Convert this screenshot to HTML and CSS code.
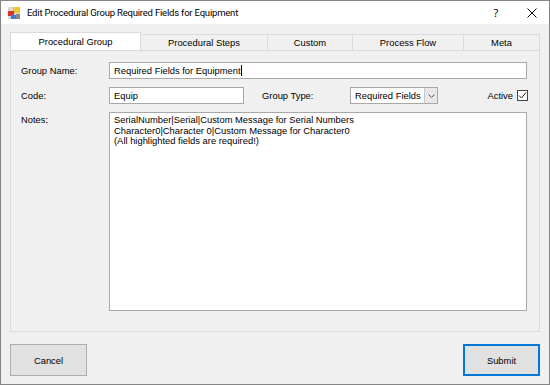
FILE: index.html
```html
<!DOCTYPE html>
<html>
<head>
    <title>Edit Procedural Group Required Fields for Equipment</title>
    <link rel="stylesheet" href="styles.css">
</head>
<body>
    <div class="window">
        <div class="titlebar">
            <svg class="app-icon" width="14" height="14" viewBox="0 0 14 14">
                <rect x="1" y="1" width="12" height="12" fill="#d8d8d8"/>
                <rect x="6" y="1" width="7" height="6" fill="#f4c430"/>
                <rect x="1" y="5" width="6" height="5" fill="#d9342b"/>
                <rect x="4" y="9" width="5" height="4" fill="#3d7bd4"/>
                <rect x="9" y="8" width="4" height="5" fill="#8a8a8a"/>
            </svg>
            <span class="title">Edit Procedural Group Required Fields for Equipment</span>
            <span class="caption-btn help">?</span>
            <span class="caption-btn close">
                <svg width="10" height="10" viewBox="0 0 10 10">
                    <path d="M0.5 0.5 L9.5 9.5 M9.5 0.5 L0.5 9.5" stroke="#000" stroke-width="1"/>
                </svg>
            </span>
        </div>

        <div class="client">
            <div class="tabs">
                <div class="tab active" style="width: 131px">Procedural Group</div>
                <div class="tab" style="width: 127px">Procedural Steps</div>
                <div class="tab" style="width: 85px">Custom</div>
                <div class="tab" style="width: 111px">Process Flow</div>
                <div class="tab" style="width: 76px">Meta</div>
            </div>

            <div class="panel">
                <div class="row">
                    <label class="lbl">Group Name:</label>
                    <div class="textbox wide">Required Fields for Equipment<span class="caret"></span></div>
                </div>
                <div class="row">
                    <label class="lbl">Code:</label>
                    <div class="textbox code">Equip</div>
                    <label class="lbl type-lbl">Group Type:</label>
                    <div class="combo">
                        <span class="combo-text">Required Fields</span>
                        <span class="combo-btn">
                            <svg width="7" height="4" viewBox="0 0 7 4">
                                <path d="M0.5 0.5 L3.5 3.5 L6.5 0.5" fill="none" stroke="#555" stroke-width="1"/>
                            </svg>
                        </span>
                    </div>
                    <span class="spacer"></span>
                    <label class="active-lbl">Active</label>
                    <span class="checkbox">
                        <svg width="9" height="9" viewBox="0 0 9 9">
                            <path d="M1 4.5 L3.5 7 L8 1.5" fill="none" stroke="#222" stroke-width="1"/>
                        </svg>
                    </span>
                </div>
                <div class="row notes-row">
                    <label class="lbl">Notes:</label>
                    <div class="textarea">SerialNumber|Serial|Custom Message for Serial Numbers<br>Character0|Character 0|Custom Message for Character0<br>(All highlighted fields are required!)</div>
                </div>
            </div>

            <div class="footer">
                <button class="btn">Cancel</button>
                <button class="btn default">Submit</button>
            </div>
        </div>
    </div>
</body>
</html>
```

FILE: styles.css
```css
* { box-sizing: border-box; }
body { margin: 0; font-family: "Liberation Sans", Arial, sans-serif; font-size: 9.4px; color: #000; }

.window { width: 550px; height: 385px; border: 1px solid #858585; background: #f0f0f0; display: flex; flex-direction: column; }

.titlebar { height: 24px; background: #fff; display: flex; align-items: center; padding-left: 6px; }
.app-icon { margin-right: 6px; }
.title { font-family: Roboto, sans-serif; font-size: 9.5px; letter-spacing: -0.2px; flex: 1; }
.caption-btn { width: 36px; text-align: center; font-family: "Noto Sans", sans-serif; font-size: 11px; }
.help { margin-right: 1px; }
.close { width: 34px; display: flex; justify-content: center; }

.client { flex: 1; padding: 8px 9px 8px 9px; display: flex; flex-direction: column; }

.tabs { display: flex; height: 18px; align-items: flex-end; position: relative; z-index: 1; }
.tab { height: 16px; border: 1px solid #dadada; border-left: none; border-bottom: none; text-align: center; line-height: 15px; background: #f0f0f0; }
.tab:first-child { border-left: 1px solid #dadada; }
.tab.active { height: 18px; background: #fff; line-height: 18px; border-left: 1px solid #dadada; }

.panel { height: 282px; border: 1px solid #dadada; padding: 11px 11px 0 10px; }

.row { display: flex; align-items: center; margin-bottom: 8px; }
.lbl { width: 88px; }
.textbox { height: 17px; background: #fff; border: 1px solid #a8a8a8; padding: 0 4px; line-height: 15px; white-space: nowrap; }
.wide { width: 418px; }
.code { width: 135px; }
.caret { display: inline-block; width: 1px; height: 11px; background: #000; vertical-align: -2px; }

.type-lbl { margin-left: 18px; }
.combo { width: 88px; height: 17px; background: #fff; border: 1px solid #a8a8a8; display: flex; align-items: center; }
.combo-text { flex: 1; padding-left: 4px; }
.combo-btn { width: 13px; height: 15px; border-left: 1px solid #c8c8c8; background: #e8e8e8; display: flex; align-items: center; justify-content: center; }

.spacer { flex: 1; }
.active-lbl { margin-right: 4px; }
.checkbox { width: 11px; height: 11px; border: 1px solid #444; background: #fff; display: flex; align-items: center; justify-content: center; }

.notes-row { align-items: flex-start; margin-bottom: 0; }
.notes-row .lbl { padding-top: 2px; }
.textarea { width: 418px; height: 199px; background: #fff; border: 1px solid #a8a8a8; padding: 2px 4px; line-height: 10.6px; }

.footer { display: flex; justify-content: space-between; margin-top: 12px; }
.btn { width: 77px; height: 32px; background: #e1e1e1; border: 1px solid #adadad; font-family: "Liberation Sans", Arial, sans-serif; font-size: 9.4px; color: #000; padding: 0; }
.btn.default { border: 2px solid #0078d7; }
```
